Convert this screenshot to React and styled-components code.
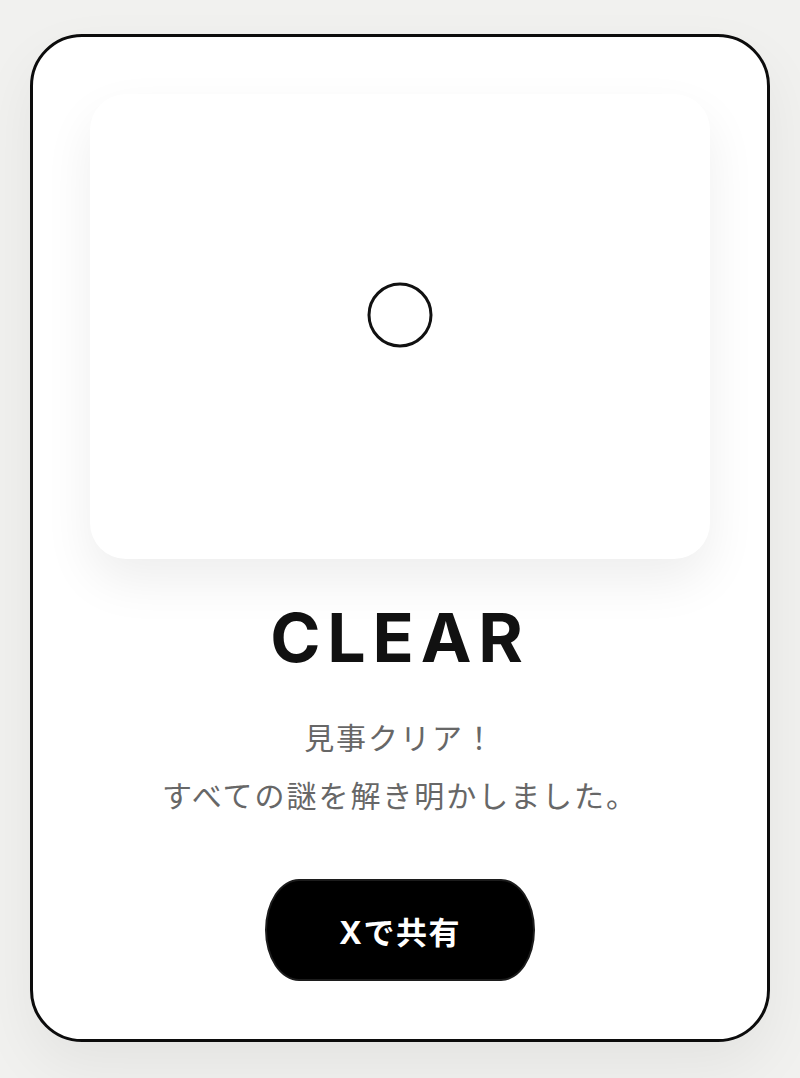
import React from 'react';
import styled, {createGlobalStyle} from 'styled-components';

const GlobalStyle = createGlobalStyle`
    html, body {
        margin: 0;
        padding: 0;
        background: #f1f1ef;
    }
    body {
        font-family: Inter, "Noto Sans CJK JP", sans-serif;
    }
`;

const Page = styled.div`
    display: flex;
    justify-content: center;
    padding: 34px 30px 36px;
    min-height: 1078px;
    box-sizing: border-box;
`;

const Card = styled.div`
    width: 740px;
    height: 1008px;
    box-sizing: border-box;
    background: #fff;
    border: 3px solid #0c0c0c;
    border-radius: 52px;
    padding: 57px;
    display: flex;
    flex-direction: column;
    align-items: center;
    box-shadow: 0 24px 60px rgba(0, 0, 0, 0.06);
`;

const Visual = styled.div`
    width: 620px;
    height: 465px;
    background: #fff;
    border-radius: 36px;
    box-shadow: 0 22px 50px rgba(0, 0, 0, 0.07);
    display: flex;
    justify-content: center;
    padding-top: 188px;
    box-sizing: border-box;
`;

const Title = styled.h1`
    margin: 44px 0 0;
    font-family: Inter, sans-serif;
    font-weight: 700;
    font-size: 68px;
    line-height: 1;
    letter-spacing: 0.1em;
    color: #111;
`;

const Message = styled.p`
    margin: 36px 0 0;
    font-family: "Noto Sans CJK JP", sans-serif;
    font-size: 30px;
    line-height: 58px;
    color: #676767;
    text-align: center;
    letter-spacing: 0.065em;
`;

const ShareButton = styled.button`
    margin-top: 56px;
    width: 270px;
    height: 102px;
    background: #000;
    color: #fff;
    border: 2px solid #1c1c1c;
    border-radius: 34px / 51px;
    font-family: Inter, "Noto Sans CJK JP", sans-serif;
    font-weight: 700;
    font-size: 31px;
    letter-spacing: 0.05em;
    cursor: pointer;
`;

function Ring() {
    return (
        <svg width="66" height="66" viewBox="0 0 66 66">
            <circle cx="33" cy="33" r="31" fill="none" stroke="#111" strokeWidth="3"/>
        </svg>
    );
}

export default function App() {
    return (
        <>
            <GlobalStyle/>
            <Page>
                <Card>
                    <Visual>
                        <Ring/>
                    </Visual>
                    <Title>CLEAR</Title>
                    <Message>
                        見事クリア！<br/>
                        すべての謎を解き明かしました。
                    </Message>
                    <ShareButton>Xで共有</ShareButton>
                </Card>
            </Page>
        </>
    );
}
